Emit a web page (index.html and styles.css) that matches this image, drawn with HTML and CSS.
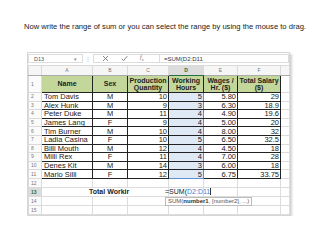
FILE: index.html
```html
<!DOCTYPE html>
<html lang="en">
<head>
    <meta charset="UTF-8">
    <meta name="viewport" content="width=device-width, initial-scale=1.0">
    <title>Sum range</title>
    <link rel="stylesheet" href="styles.css">
</head>
<body>
    <p class="note">Now write the range of sum or you can select the range by using the mouse to drag.</p>

    <div class="sheet">
        <div class="fbar">
            <div class="namebox"><span>D13</span><span class="caret">&#9662;</span></div>
            <span class="dots">&#8942;</span>
            <div class="icons">
                <svg width="7" height="7" viewBox="0 0 7 7"><path d="M1 1L6 6M6 1L1 6" stroke="#777" stroke-width="0.9" fill="none"/></svg>
                <svg width="7" height="7" viewBox="0 0 7 7"><path d="M0.8 3.8L2.6 5.6L6.2 1.2" stroke="#777" stroke-width="0.9" fill="none"/></svg>
                <i class="fx">f<sub>x</sub></i>
            </div>
            <div class="formula">=SUM(D2:D11</div>
        </div>

        <table class="grid">
            <colgroup>
                <col class="c-rn"><col class="c-a"><col class="c-b"><col class="c-c">
                <col class="c-d"><col class="c-e"><col class="c-f"><col class="c-g">
            </colgroup>
            <tr class="colhead">
                <th></th><th>A</th><th>B</th><th>C</th><th class="sel">D</th><th>E</th><th>F</th><th></th>
            </tr>
            <tr class="hdr">
                <th>1</th>
                <td>Name</td><td>Sex</td><td>Production<br>Quantity</td><td>Working<br>Hours</td><td>Wages /<br>Hr. ($)</td><td>Total Salary<br>($)</td>
                <td class="g"></td>
            </tr>
            <tr><th>2</th><td class="nm">Tom Davis</td><td class="ct">M</td><td>10</td><td class="rng top">5</td><td>5.80</td><td>29</td><td class="g"></td></tr>
            <tr><th>3</th><td class="nm">Alex Hunk</td><td class="ct">M</td><td>9</td><td class="rng">3</td><td>6.30</td><td>18.9</td><td class="g"></td></tr>
            <tr><th>4</th><td class="nm">Peter Duke</td><td class="ct">M</td><td>11</td><td class="rng">4</td><td>4.90</td><td>19.6</td><td class="g"></td></tr>
            <tr><th>5</th><td class="nm">James Lang</td><td class="ct">F</td><td>9</td><td class="rng">4</td><td>5.00</td><td>20</td><td class="g"></td></tr>
            <tr><th>6</th><td class="nm">Tim Burner</td><td class="ct">M</td><td>10</td><td class="rng">4</td><td>8.00</td><td>32</td><td class="g"></td></tr>
            <tr><th>7</th><td class="nm">Ladia Casina</td><td class="ct">F</td><td>10</td><td class="rng">5</td><td>6.50</td><td>32.5</td><td class="g"></td></tr>
            <tr><th>8</th><td class="nm">Billi Mouth</td><td class="ct">M</td><td>12</td><td class="rng">4</td><td>4.50</td><td>18</td><td class="g"></td></tr>
            <tr><th>9</th><td class="nm">Milli Rex</td><td class="ct">F</td><td>11</td><td class="rng">4</td><td>7.00</td><td>28</td><td class="g"></td></tr>
            <tr><th>10</th><td class="nm">Denes Kit</td><td class="ct">M</td><td>14</td><td class="rng">3</td><td>6.00</td><td>18</td><td class="g"></td></tr>
            <tr><th>11</th><td class="nm">Mario Silli</td><td class="ct">F</td><td>12</td><td class="rng bot">5</td><td>6.75</td><td>33.75</td><td class="g"></td></tr>
            <tr class="empty"><th>12</th><td></td><td></td><td></td><td></td><td></td><td></td><td></td></tr>
            <tr class="empty edit">
                <th class="sel">13</th>
                <td colspan="3" class="total">Total Workir</td>
                <td class="editing">
                    <span class="entry">=SUM(<span class="ref">D2:D11</span></span>
                    <span class="tip">SUM(<b>number1</b>, [number2], ...)</span>
                </td>
                <td></td><td></td><td></td>
            </tr>
            <tr class="empty"><th>14</th><td></td><td></td><td></td><td></td><td></td><td></td><td></td></tr>
            <tr class="empty"><th>15</th><td></td><td></td><td></td><td></td><td></td><td></td><td></td></tr>
        </table>
    </div>
</body>
</html>
```

FILE: styles.css
```css
body{
    margin: 0;
    background-color: #fff;
    font-family: "Liberation Sans", Arial, sans-serif;
    color: #222;
}
.note{
    margin: 22px 0 0 24px;
    font-size: 7.6px;
    line-height: 10px;
    white-space: nowrap;
}

.sheet{
    margin: 20px 0 0 27px;
    width: 261px;
    background-color: #fff;
    border: 1px solid #d6d6d6;
    box-shadow: 2px 2px 2px rgba(0,0,0,0.18);
}

/* formula bar */
.fbar{
    display: flex;
    align-items: center;
    height: 9px;
    padding: 1px 0 2px;
    font-size: 5.5px;
    color: #555;
}
.namebox{
    display: flex;
    justify-content: space-between;
    width: 55px;
    height: 9px;
    padding: 0 5px;
    border: 1px solid #dcdcdc;
    box-sizing: border-box;
    align-items: center;
}
.caret{
    color: #888;
    font-size: 5px;
}
.dots{
    width: 10px;
    text-align: center;
    color: #aaa;
}
.icons{
    display: flex;
    align-items: center;
    gap: 12px;
    width: 66px;
    height: 9px;
    padding-left: 8px;
    box-sizing: border-box;
    border: 1px solid #dcdcdc;
    border-right: 0;
}
.fx{
    font-family: "Liberation Serif", serif;
    font-size: 6px;
    color: #666;
}
.fx sub{
    font-size: 4px;
}
.formula{
    flex: 1;
    height: 9px;
    padding-left: 4px;
    line-height: 8px;
    border: 1px solid #dcdcdc;
    box-sizing: border-box;
    font-size: 6px;
    color: #333;
}

/* grid */
.grid{
    border-collapse: collapse;
    table-layout: fixed;
    width: 261px;
}
.c-rn{ width: 13px; }
.c-a{ width: 51px; }
.c-b{ width: 35px; }
.c-c{ width: 41px; }
.c-d{ width: 35px; }
.c-e{ width: 34px; }
.c-f{ width: 43px; }
.c-g{ width: 9px; }

.grid tr{
    height: 8.6px;
}
.grid th,
.grid td{
    padding: 0 1px;
    height: 7px;
    line-height: 7px;
    font-size: 7.5px;
    white-space: nowrap;
    overflow: hidden;
    border: 1px solid #222;
    text-align: right;
}
.grid th{
    font-weight: normal;
    font-size: 5px;
    color: #777;
    text-align: left;
    padding-left: 2px;
    border: 1px solid #dadada;
    background-color: #fbfbfb;
}
.grid .colhead{
    height: 10px;
}
.colhead th{
    text-align: center;
    padding: 0;
    border-bottom-color: #ababab;
    background-color: #f6f6f6;
}
.grid th.sel{
    background-color: #dcdcdc;
    color: #217346;
    font-weight: bold;
}
.colhead th.sel{
    border-bottom: 1px solid #217346;
}

.grid .hdr{
    height: 17px;
}
.hdr td{
    line-height: 7.5px;
    font-size: 7px;
    text-align: center;
    font-weight: bold;
    background-color: #c4d79b;
}
.grid td.nm{
    text-align: left;
    padding-left: 2px;
}
.grid td.ct{
    text-align: center;
}
.grid td.g,
.empty td{
    border: 1px solid #dcdcdc;
    background-color: #fff;
}
.grid td.rng{
    background-color: #dfe9f5;
    border-left: 1px solid #5a8ed0;
    border-right: 1px solid #5a8ed0;
}
.grid td.rng.top{
    border-top: 1px solid #5a8ed0;
}
.grid td.rng.bot{
    border-bottom: 1px solid #5a8ed0;
}
.grid .empty{
    height: 9px;
}
.grid .empty th,
.grid .empty td{
    height: 8px;
    line-height: 8px;
}

.grid td.total{
    text-align: left;
    padding-left: 47px;
    font-size: 7px;
    font-weight: bold;
    border-color: #dcdcdc;
}
.grid td.editing{
    overflow: visible;
    position: relative;
    text-align: left;
    padding-left: 0;
    border-top: 1px solid #217346;
}
.entry{
    margin-left: -4px;
    font-size: 7px;
}
.ref{
    color: #3f7fd0;
    border-right: 1px solid #333;
}
.tip{
    position: absolute;
    left: -4px;
    top: 9px;
    padding: 0 2px;
    height: 7px;
    line-height: 7px;
    font-size: 6px;
    color: #555;
    background-color: #fff;
    border: 1px solid #bbb;
    white-space: nowrap;
}
.tip b{
    color: #333;
}
```
